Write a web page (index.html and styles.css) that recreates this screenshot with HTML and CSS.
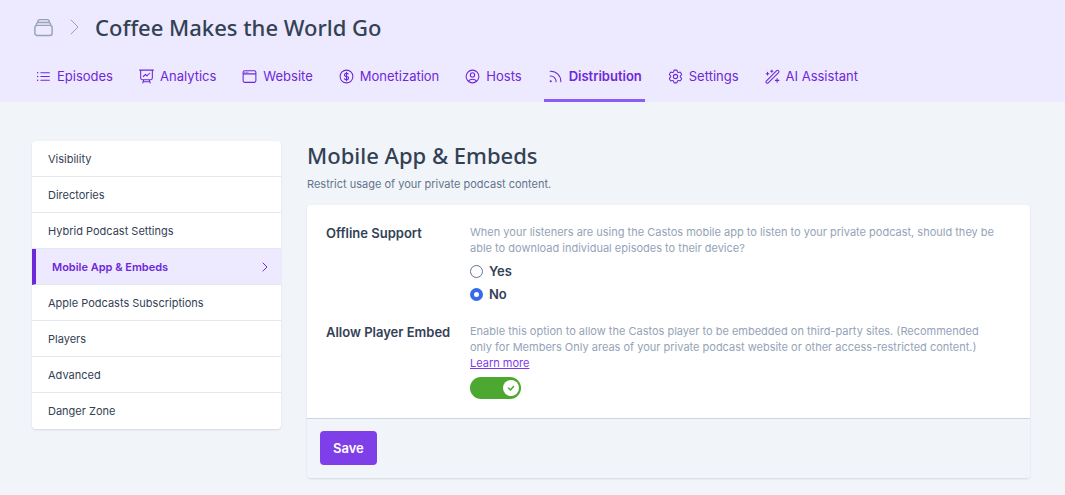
FILE: index.html
```
<!DOCTYPE html>
<html lang="en">

<head>
    <meta charset="UTF-8">
    <meta name="viewport" content="width=device-width, initial-scale=1.0">
    <title>Mobile App &amp; Embeds</title>
    <link rel="stylesheet" href="styles.css">
</head>

<body>
    <header class="header">
        <div class="breadcrumb">
            <a href="#" class="crumb" aria-label="Podcasts">
                <svg class="crumb-icon" viewBox="0 0 24 24"><path d="M6 6.878V6a2.25 2.25 0 0 1 2.25-2.25h7.5A2.25 2.25 0 0 1 18 6v.878m-12 0c.235-.083.487-.128.75-.128h10.5c.263 0 .515.045.75.128m-12 0A2.25 2.25 0 0 0 4.5 9v.878m13.5-3A2.25 2.25 0 0 1 19.5 9v.878m0 0a2.246 2.246 0 0 0-.75-.128H5.25c-.263 0-.515.045-.75.128m15 0A2.25 2.25 0 0 1 21 12v6a2.25 2.25 0 0 1-2.25 2.25H5.25A2.25 2.25 0 0 1 3 18v-6c0-.98.626-1.813 1.5-2.122"/></svg>
            </a>
            <svg class="crumb-arrow" viewBox="0 0 10 16"><path d="M1 1l7 7-7 7"/></svg>
            <h1>Coffee Makes the World Go</h1>
        </div>
        <nav class="tabs">
            <a href="#" class="tab">
                <svg viewBox="0 0 24 24"><path d="M8.25 6.75h12M8.25 12h12m-12 5.25h12M3.75 6.75h.007v.008H3.75V6.75Zm.375 0a.375.375 0 1 1-.75 0 .375.375 0 0 1 .75 0ZM3.75 12h.007v.008H3.75V12Zm.375 0a.375.375 0 1 1-.75 0 .375.375 0 0 1 .75 0Zm-.375 5.25h.007v.008H3.75v-.008Zm.375 0a.375.375 0 1 1-.75 0 .375.375 0 0 1 .75 0Z"/></svg>
                Episodes
            </a>
            <a href="#" class="tab">
                <svg viewBox="0 0 24 24"><path d="M3.75 3v11.25A2.25 2.25 0 0 0 6 16.5h2.25M3.75 3h-1.5m1.5 0h16.5m0 0h1.5m-1.5 0v11.25A2.25 2.25 0 0 1 18 16.5h-2.25m-7.5 0h7.5m-7.5 0-1 3m8.5-3 1 3m0 0 .5 1.5m-.5-1.5h-9.5m0 0-.5 1.5m.75-9 3-3 2.148 2.148A12.061 12.061 0 0 1 16.5 7.605"/></svg>
                Analytics
            </a>
            <a href="#" class="tab">
                <svg viewBox="0 0 24 24"><path d="M3 8.25V18a2.25 2.25 0 0 0 2.25 2.25h13.5A2.25 2.25 0 0 0 21 18V8.25m-18 0V6a2.25 2.25 0 0 1 2.25-2.25h13.5A2.25 2.25 0 0 1 21 6v2.25m-18 0h18M5.25 6h.008v.008H5.25V6ZM7.5 6h.008v.008H7.5V6Zm2.25 0h.008v.008H9.75V6Z"/></svg>
                Website
            </a>
            <a href="#" class="tab">
                <svg viewBox="0 0 24 24"><path d="M12 6v12m-3-2.818.879.659c1.171.879 3.07.879 4.242 0 1.172-.879 1.172-2.303 0-3.182C13.536 12.219 12.768 12 12 12c-.725 0-1.45-.22-2.003-.659-1.106-.879-1.106-2.303 0-3.182s2.9-.879 4.006 0l.415.33M21 12a9 9 0 1 1-18 0 9 9 0 0 1 18 0Z"/></svg>
                Monetization
            </a>
            <a href="#" class="tab">
                <svg viewBox="0 0 24 24"><path d="M17.982 18.725A7.488 7.488 0 0 0 12 15.75a7.488 7.488 0 0 0-5.982 2.975m11.963 0a9 9 0 1 0-11.963 0m11.963 0A8.966 8.966 0 0 1 12 21a8.966 8.966 0 0 1-5.982-2.275M15 9.75a3 3 0 1 1-6 0 3 3 0 0 1 6 0Z"/></svg>
                Hosts
            </a>
            <a href="#" class="tab active" aria-current="page">
                <svg viewBox="0 0 24 24"><path d="M12.75 19.5v-.75a7.5 7.5 0 0 0-7.5-7.5H4.5m0-6.75h.75c7.87 0 14.25 6.38 14.25 14.25v.75M6 18.75a.75.75 0 1 1-1.5 0 .75.75 0 0 1 1.5 0Z"/></svg>
                Distribution
            </a>
            <a href="#" class="tab">
                <svg viewBox="0 0 24 24"><path d="M9.594 3.94c.09-.542.56-.94 1.11-.94h2.593c.55 0 1.02.398 1.11.94l.213 1.281c.063.374.313.686.645.87.074.04.147.083.22.127.325.196.72.257 1.075.124l1.217-.456a1.125 1.125 0 0 1 1.37.49l1.296 2.247a1.125 1.125 0 0 1-.26 1.431l-1.003.827c-.293.241-.438.613-.43.992a7.723 7.723 0 0 1 0 .255c-.008.378.137.75.43.991l1.004.827c.424.35.534.955.26 1.43l-1.298 2.247a1.125 1.125 0 0 1-1.369.491l-1.217-.456c-.355-.133-.75-.072-1.076.124a6.47 6.47 0 0 1-.22.128c-.331.183-.581.495-.644.869l-.213 1.281c-.09.543-.56.94-1.11.94h-2.594c-.55 0-1.019-.398-1.11-.94l-.213-1.281c-.062-.374-.312-.686-.644-.87a6.52 6.52 0 0 1-.22-.127c-.325-.196-.72-.257-1.076-.124l-1.217.456a1.125 1.125 0 0 1-1.369-.49l-1.297-2.247a1.125 1.125 0 0 1 .26-1.431l1.004-.827c.292-.24.437-.613.43-.991a6.932 6.932 0 0 1 0-.255c.007-.38-.138-.751-.43-.992l-1.004-.827a1.125 1.125 0 0 1-.26-1.43l1.297-2.247a1.125 1.125 0 0 1 1.37-.491l1.216.456c.356.133.751.072 1.076-.124.072-.044.146-.086.22-.128.332-.183.582-.495.644-.869l.214-1.28Z"/><path d="M15 12a3 3 0 1 1-6 0 3 3 0 0 1 6 0Z"/></svg>
                Settings
            </a>
            <a href="#" class="tab">
                <svg viewBox="0 0 24 24"><path d="M3.2 18.4 17.9 3.7a1.8 1.8 0 0 1 2.5 0l.2.2a1.8 1.8 0 0 1 0 2.5L5.9 21.1a1.6 1.6 0 0 1-2.3 0l-.4-.4a1.6 1.6 0 0 1 0-2.3ZM5 6v4M3 8h4M11 3v3M9.500 4.500h3M18.500 15v5M16 17.500h5"/></svg>
                AI Assistant
            </a>
        </nav>
    </header>

    <div class="page">
        <nav class="side-menu">
            <a href="#">Visibility</a>
            <a href="#">Directories</a>
            <a href="#">Hybrid Podcast Settings</a>
            <a href="#" class="selected" aria-current="page">
                Mobile App &amp; Embeds
                <svg viewBox="0 0 8 10"><path d="M2 1l4 4-4 4"/></svg>
            </a>
            <a href="#">Apple Podcasts Subscriptions</a>
            <a href="#">Players</a>
            <a href="#">Advanced</a>
            <a href="#">Danger Zone</a>
        </nav>

        <main class="content">
            <h2>Mobile App &amp; Embeds</h2>
            <p class="subtitle">Restrict usage of your private podcast content.</p>

            <form class="card">
                <div class="card-body">
                    <div class="setting" role="radiogroup" aria-labelledby="offlineLabel">
                        <div class="setting-name" id="offlineLabel">Offline Support</div>
                        <div class="setting-field">
                            <p>When your listeners are using the Castos mobile app to listen to your private podcast, should they be able to download individual episodes to their device?</p>
                            <label class="radio" for="offlineYes">
                                <input type="radio" id="offlineYes" name="offline" value="yes">
                                Yes
                            </label>
                            <label class="radio" for="offlineNo">
                                <input type="radio" id="offlineNo" name="offline" value="no" checked>
                                No
                            </label>
                        </div>
                    </div>
                    <div class="setting">
                        <label class="setting-name" for="embed">Allow Player Embed</label>
                        <div class="setting-field">
                            <p>Enable this option to allow the Castos player to be embedded on third-party sites. (Recommended only for Members Only areas of your private podcast website or other access-restricted content.) <a href="#">Learn more</a></p>
                            <div class="toggle">
                                <input type="checkbox" id="embed" name="embed" checked>
                                <span class="knob"><svg viewBox="0 0 16 16"><path d="M5.500 8l2 2 3-3.500"/></svg></span>
                            </div>
                        </div>
                    </div>
                </div>
                <div class="card-footer">
                    <button type="submit">Save</button>
                </div>
            </form>
        </main>
    </div>
</body>

</html>
```
FILE: styles.css
```
* {
    box-sizing: border-box;
}

body {
    margin: 0;
    background-color: #f1f5fa;
    color: #334155;
    font-family: Inter, "Liberation Sans", sans-serif;
    font-size: 11px;
    line-height: 16px;
}

h1, h2, p {
    margin: 0;
}

h1, h2 {
    font-family: "Noto Sans", "Open Sans", sans-serif;
    font-size: 22px;
    font-weight: 500;
    line-height: 32px;
}

h2 {
    line-height: 28px;
}

svg {
    display: block;
    flex: none;
    fill: none;
    stroke: currentColor;
    stroke-width: 1.5;
    stroke-linecap: round;
    stroke-linejoin: round;
}

.header {
    background-color: #ede9fe;
    padding: 11px 32px 0;
}

.breadcrumb {
    display: flex;
    align-items: center;
}

.crumb {
    color: #94a3b8;
}

.crumb-icon {
    width: 23px;
    height: 23px;
}

.crumb-arrow {
    width: 10px;
    height: 16px;
    margin: 0 15px;
    color: #94a3b8;
    stroke-width: 1;
}

.tabs {
    display: flex;
    gap: 19px;
    margin-top: 10px;
}

.tab {
    display: flex;
    align-items: center;
    gap: 5px;
    height: 49px;
    padding: 0 3px;
    border-bottom: 3px solid transparent;
    color: #6d28d9;
    font-size: 13px;
    text-decoration: none;
    white-space: nowrap;
}

.tab svg {
    width: 17px;
    height: 17px;
}

.tab.active {
    border-bottom-color: #8b5cf6;
    font-weight: 600;
}

.page {
    display: flex;
    align-items: flex-start;
    gap: 26px;
    padding: 39px 35px 16px 32px;
}

.side-menu {
    flex: none;
    width: 249px;
    background-color: #fff;
    border-radius: 4px;
    box-shadow: 0 1px 2px rgba(15, 23, 42, 0.12);
    overflow: hidden;
}

.side-menu a {
    display: flex;
    align-items: center;
    justify-content: space-between;
    height: 36px;
    padding: 0 12px 0 16px;
    border-bottom: 1px solid #e2e8f0;
    color: #334155;
    text-decoration: none;
}

.side-menu a:last-child {
    border-bottom: none;
}

.side-menu .selected {
    background-color: #ede9fe;
    border-left: 4px solid #6d28d9;
    color: #6d28d9;
    font-weight: 600;
}

.side-menu svg {
    width: 8px;
    height: 10px;
    stroke-width: 1;
}

.content {
    flex: 1;
    min-width: 0;
}

.subtitle {
    margin: 7px 0 13px;
    color: #64748b;
}

.card {
    background-color: #fff;
    border-radius: 4px;
    box-shadow: 0 1px 2px rgba(15, 23, 42, 0.12);
    overflow: hidden;
}

.card-body {
    display: flex;
    flex-direction: column;
    gap: 21px;
    padding: 19px;
}

.setting {
    display: grid;
    grid-template-columns: 128px 1fr;
    gap: 16px;
}

.setting-name {
    font-size: 13px;
    font-weight: 600;
    line-height: 18px;
}

.setting-field {
    padding-right: 10px;
}

.setting-field p {
    color: #94a3b8;
}

.setting-field a {
    color: #7c3aed;
}

.radio {
    display: flex;
    align-items: center;
    gap: 6px;
    width: max-content;
    height: 16px;
    margin-top: 7px;
    font-size: 13px;
    font-weight: 600;
}

.radio input {
    appearance: none;
    width: 13px;
    height: 13px;
    margin: 0;
    border: 1px solid #64748b;
    border-radius: 50%;
    background-color: #fff;
}

.radio input:checked {
    border: 4px solid #3869e8;
}

.toggle {
    position: relative;
    width: 51px;
    height: 22px;
    margin-top: 6px;
}

.toggle input {
    display: block;
    appearance: none;
    width: 100%;
    height: 100%;
    margin: 0;
    border-radius: 11px;
    background-color: #cbd5e1;
}

.toggle input:checked {
    background-color: #4da832;
}

.knob {
    position: absolute;
    top: 3px;
    right: 2px;
    width: 16px;
    height: 16px;
    border-radius: 50%;
    background-color: #fff;
    color: #4da832;
    pointer-events: none;
}

.card-footer {
    padding: 12px 13px 13px;
    border-top: 1px solid #cbd5e1;
    background-color: #f1f5fa;
}

button {
    height: 34px;
    padding: 0 13px;
    border: none;
    border-radius: 4px;
    background-color: #7e3fe8;
    color: #fff;
    font-family: inherit;
    font-size: 13px;
    font-weight: 600;
    cursor: pointer;
}
```
